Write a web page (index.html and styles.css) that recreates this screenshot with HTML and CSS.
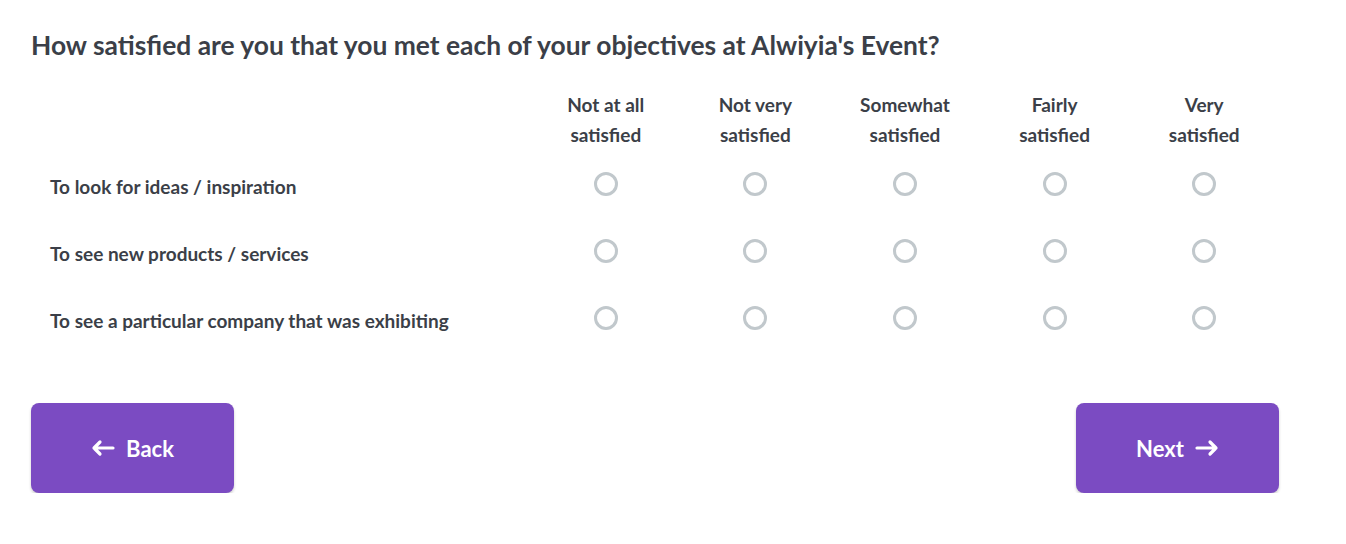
FILE: index.html
```html
<!DOCTYPE html>
<html lang="en">
<head>
 <meta charset="UTF-8">
 <title>Survey</title>
 <link rel="stylesheet" href="styles.css">
</head>
<body>
 <div class="survey">
  <h1 class="question">How satisfied are you that you met each of your objectives at Alwiyia's Event?</h1>
  <table class="matrix">
   <thead>
    <tr>
     <th class="label-col"></th>
     <th>Not at all<br>satisfied</th>
     <th>Not very<br>satisfied</th>
     <th>Somewhat<br>satisfied</th>
     <th>Fairly<br>satisfied</th>
     <th>Very<br>satisfied</th>
    </tr>
   </thead>
   <tbody>
    <tr>
     <td class="row-label">To look for ideas / inspiration</td>
     <td><span class="radio"></span></td>
     <td><span class="radio"></span></td>
     <td><span class="radio"></span></td>
     <td><span class="radio"></span></td>
     <td><span class="radio"></span></td>
    </tr>
    <tr>
     <td class="row-label">To see new products / services</td>
     <td><span class="radio"></span></td>
     <td><span class="radio"></span></td>
     <td><span class="radio"></span></td>
     <td><span class="radio"></span></td>
     <td><span class="radio"></span></td>
    </tr>
    <tr>
     <td class="row-label">To see a particular company that was exhibiting</td>
     <td><span class="radio"></span></td>
     <td><span class="radio"></span></td>
     <td><span class="radio"></span></td>
     <td><span class="radio"></span></td>
     <td><span class="radio"></span></td>
    </tr>
   </tbody>
  </table>
  <div class="nav">
   <button class="nav-btn">
    <svg width="24" height="20" viewBox="0 0 24 20"><path d="M22 10H3M9 4L3 10l6 6" fill="none" stroke="#fff" stroke-width="3.2" stroke-linecap="round" stroke-linejoin="round"/></svg>
    Back
   </button>
   <button class="nav-btn">
    Next
    <svg width="24" height="20" viewBox="0 0 24 20"><path d="M2 10h19M15 4l6 6-6 6" fill="none" stroke="#fff" stroke-width="3.2" stroke-linecap="round" stroke-linejoin="round"/></svg>
   </button>
  </div>
 </div>
</body>
</html>
```
FILE: styles.css
```css
body {
 margin: 0;
 font-family: Lato, "Open Sans", sans-serif;
 color: #3b3f48;
 background: #fff;
}
.survey {
 width: 1248px;
 padding: 31px 0 0 31px;
}
.question {
 font-size: 26.4px;
 line-height: 29px;
 font-weight: 700;
 margin: 0 0 30px;
}
.matrix {
 width: 100%;
 border-collapse: collapse;
 table-layout: fixed;
}
.matrix th {
 font-size: 19px;
 line-height: 30px;
 font-weight: 700;
 text-align: center;
 padding: 0;
}
.matrix th.label-col {
 width: 500px;
}
.matrix td {
 height: 67px;
 padding: 0;
 text-align: center;
 vertical-align: middle;
}
.matrix td.row-label {
 text-align: left;
 padding: 6px 0 0 19px;
 height: 61px;
 font-size: 19px;
 font-weight: 700;
}
.radio {
 display: inline-block;
 width: 18px;
 height: 18px;
 border: 3px solid #c1c8cc;
 border-radius: 50%;
 vertical-align: middle;
}
.nav {
 display: flex;
 justify-content: space-between;
 margin-top: 52px;
}
.nav-btn {
 display: flex;
 align-items: center;
 justify-content: center;
 gap: 11px;
 width: 203px;
 height: 90px;
 border: none;
 border-radius: 8px;
 background: #7b4bc2;
 color: #fff;
 font-family: Lato, sans-serif;
 font-size: 22px;
 font-weight: 700;
 box-shadow: 0 2px 3px rgba(0,0,0,0.2);
 cursor: pointer;
}
```
